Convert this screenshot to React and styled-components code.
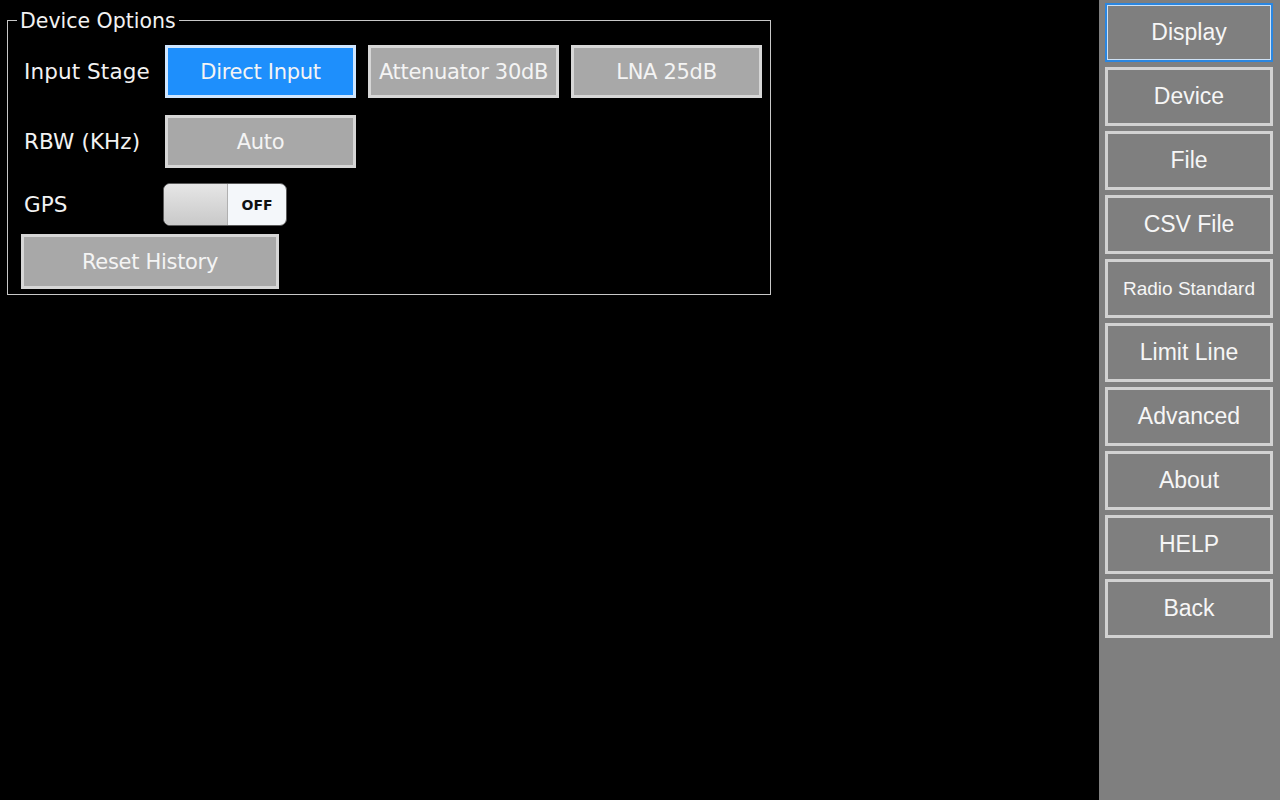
import React, { useState } from "react";
import styled, { createGlobalStyle, css } from "styled-components";

const GlobalStyle = createGlobalStyle`
  html, body {
    margin: 0;
    padding: 0;
    background: #000;
  }
  #root {
    height: 800px;
  }
`;

const inputStages = ["Direct Input", "Attenuator 30dB", "LNA 25dB"];
const menuItems = [
  "Display",
  "Device",
  "File",
  "CSV File",
  "Radio Standard",
  "Limit Line",
  "Advanced",
  "About",
  "HELP",
  "Back",
];

const App = () => {
  const [stage, setStage] = useState("Direct Input");
  const [gps, setGps] = useState(false);

  return (
    <>
      <GlobalStyle />
      <StScreen>
        <StMain>
          <StGroup>
            <StLegend>Device Options</StLegend>
            <StRow>
              <StLabel>Input Stage</StLabel>
              {inputStages.map((s) => (
                <StOption key={s} $active={stage === s} onClick={() => setStage(s)}>
                  {s}
                </StOption>
              ))}
            </StRow>
            <StRow $top={17}>
              <StLabel>RBW (KHz)</StLabel>
              <StOption>Auto</StOption>
            </StRow>
            <StRow $top={15}>
              <StLabel>GPS</StLabel>
              <StToggle onClick={() => setGps(!gps)}>
                <StKnob />
                <StToggleText>{gps ? "ON" : "OFF"}</StToggleText>
              </StToggle>
            </StRow>
            <StResetRow>
              <StResetButton>Reset History</StResetButton>
            </StResetRow>
          </StGroup>
        </StMain>
        <StSidebar>
          {menuItems.map((m) => (
            <StMenuButton key={m} $selected={m === "Display"} $small={m === "Radio Standard"}>
              {m}
            </StMenuButton>
          ))}
        </StSidebar>
      </StScreen>
    </>
  );
};

export default App;

const StScreen = styled.div`
  display: flex;
  width: 1280px;
  height: 800px;
  background: #000;
  overflow: hidden;
`;

const StMain = styled.main`
  flex: 1;
  padding: 20px 0 0 7px;
`;

const StGroup = styled.fieldset`
  box-sizing: border-box;
  width: 764px;
  height: 275px;
  margin: 0;
  padding: 24px 0 0 13px;
  border: 1px solid #c8c8c8;
  position: relative;
`;

const StLegend = styled.legend`
  position: absolute;
  top: -11px;
  left: 9px;
  padding: 0 3px;
  background: #000;
  color: #f2f2f2;
  font-family: "DejaVu Sans", sans-serif;
  font-size: 20.5px;
  letter-spacing: 0;
  line-height: 22px;
`;

const StRow = styled.div`
  display: flex;
  align-items: center;
  gap: 12px;
  margin-top: ${(p) => (p.$top ? p.$top : 0)}px;
`;

const StLabel = styled.div`
  width: 141px;
  margin-left: 3px;
  margin-right: -12px;
  color: #f2f2f2;
  font-family: "DejaVu Sans", sans-serif;
  font-size: 21.5px;
  letter-spacing: 0.1px;
`;

const buttonText = css`
  font-family: "DejaVu Sans", sans-serif;
  font-size: 21px;
  letter-spacing: -0.3px;
  color: #f4f4f4;
`;

const StOption = styled.button`
  ${buttonText}
  box-sizing: border-box;
  width: 191px;
  height: 53px;
  padding: 0;
  background: ${(p) => (p.$active ? "#1e8ffc" : "#a8a8a8")};
  border: 3px solid ${(p) => (p.$active ? "#cfe6ff" : "#d6d6d6")};
  cursor: pointer;
`;

const StToggle = styled.div`
  box-sizing: border-box;
  display: flex;
  width: 124px;
  height: 43px;
  margin-left: -2px;
  border: 1px solid #5a5a5a;
  border-radius: 7px;
  overflow: hidden;
  background: #f4f7fa;
  cursor: pointer;
`;

const StKnob = styled.div`
  width: 63px;
  background: linear-gradient(#e6e6e6, #c9c9c9);
  border-right: 1px solid #b0b0b0;
  border-radius: 6px 0 0 6px;
`;

const StToggleText = styled.div`
  flex: 1;
  display: flex;
  align-items: center;
  justify-content: center;
  font-family: "DejaVu Sans", sans-serif;
  font-weight: bold;
  font-size: 14px;
  color: #111;
`;

const StResetRow = styled.div`
  margin-top: 8px;
  display: flex;
`;

const StResetButton = styled.button`
  ${buttonText}
  box-sizing: border-box;
  width: 258px;
  height: 55px;
  background: #a8a8a8;
  border: 3px solid #d6d6d6;
  cursor: pointer;
`;

const StSidebar = styled.aside`
  width: 181px;
  background: #7f7f7f;
  padding: 3px 7px 0 6px;
  box-sizing: border-box;
  display: flex;
  flex-direction: column;
  gap: 5px;
`;

const StMenuButton = styled.button`
  box-sizing: border-box;
  height: 59px;
  width: 100%;
  padding: 0;
  background: #7f7f7f;
  border: 3px solid #d2d2d2;
  color: #f6f6f6;
  font-family: "Liberation Sans", Arial, sans-serif;
  font-size: ${(p) => (p.$small ? "19px" : "23px")};
  cursor: pointer;

  ${(p) =>
    p.$selected &&
    css`
      border: 2px solid #2a86e0;
      box-shadow: inset 0 0 0 1px #cfe2f5;
    `}
`;
